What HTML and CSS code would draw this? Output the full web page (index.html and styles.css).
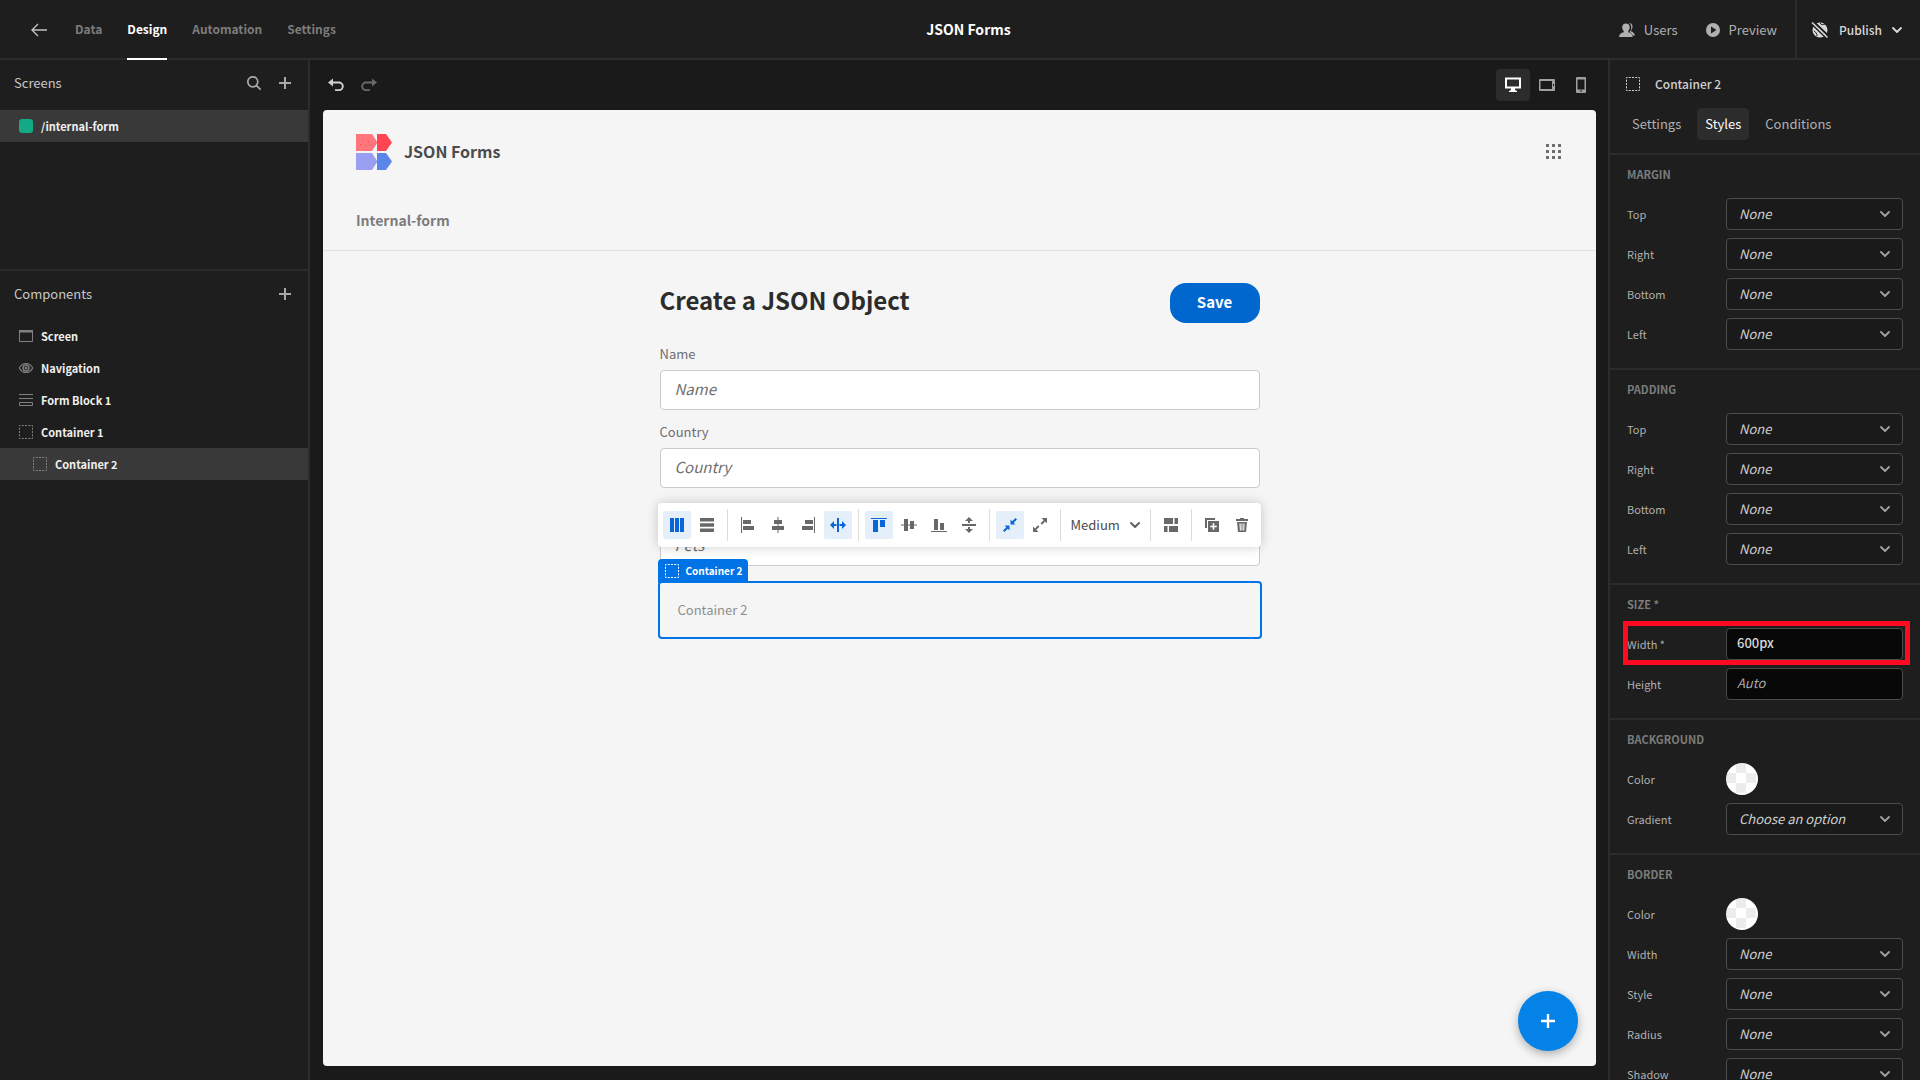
FILE: index.html
```html
<!DOCTYPE html>
<html lang="en">
<head>
<meta charset="utf-8">
<title>JSON Forms</title>
<link rel="stylesheet" href="styles.css">
</head>
<body>
<svg class="sprite" aria-hidden="true">
  <symbol id="chevron" viewBox="0 0 10 10"><path d="M1 3l4 4 4-4" fill="none" stroke="currentColor" stroke-width="1.800" stroke-linecap="round" stroke-linejoin="round"/></symbol>
  <symbol id="dashed" viewBox="0 0 14 14"><rect x=".5" y=".5" width="13" height="13" fill="none" stroke="currentColor" stroke-dasharray="2 1.25" stroke-dashoffset="1"/></symbol>
  <symbol id="plus" viewBox="0 0 12 12"><path d="M6 0v12M0 6h12" fill="none" stroke="currentColor" stroke-width="2"/></symbol>
  <symbol id="undo" viewBox="0 0 16 14"><path d="M4 4.500h7a3.800 3.800 0 0 1 0 7.600H7" fill="none" stroke="currentColor" stroke-width="1.900"/><path d="M0 4.500L5 .5v8z" fill="currentColor"/></symbol>
</svg>

<header class="topbar">
  <div class="topbar-left">
    <button class="icon-btn back" aria-label="Back"><svg width="16" height="14" viewBox="0 0 16 14"><path d="M7 1L1 7l6 6M1 7h15" fill="none" stroke="currentColor" stroke-width="1.4"/></svg></button>
    <nav class="tabs">
      <a href="#data">Data</a>
      <a href="#design" class="active">Design</a>
      <a href="#automation">Automation</a>
      <a href="#settings">Settings</a>
    </nav>
  </div>
  <h1 class="app-name">JSON Forms</h1>
  <div class="topbar-right">
    <button class="top-btn"><svg width="16" height="14" viewBox="0 0 16 14" fill="currentColor"><path d="M10 0c2.200 0 3.500 1.400 3.500 3.600 0 1.600-.7 3-1.600 3.900v.8c1.800.7 3.500 1.700 4.100 4.200h-2.200c-.5-1.700-1.700-2.800-3.300-3.600 1.500-1.500 2-3.600 1.700-5.500C11.900 1.800 11.100.7 10 0z"/><path d="M7 .5c2.300 0 3.700 1.400 3.700 3.700 0 1.500-.6 3-1.500 3.900v1.100c2.500.6 4.300 1.800 4.500 4.800H0c.3-3 2.200-4.200 4.700-4.800V8.100c-.9-.9-1.500-2.400-1.500-3.900C3.200 1.900 4.700.5 7 .5z"/></svg>Users</button>
    <button class="top-btn"><svg width="14" height="14" viewBox="0 0 14 14"><path fill="currentColor" fill-rule="evenodd" d="M7 0a7 7 0 1 1 0 14A7 7 0 0 1 7 0zM5 3.500v7l5.500-3.500z"/></svg>Preview</button>
    <button class="top-btn publish"><svg width="18" height="16" viewBox="0 0 18 16"><circle cx="9" cy="8" r="7.500" fill="currentColor"/><path d="M4 3.500c3 0 4 2 2 4M9 1c1 2 3 2 5 1M3 9c2 1 3 3 3 5" fill="none" stroke="#1e1e1e"/><path d="M0 1l15.500 15M3 0l14.500 14" stroke="#1e1e1e" stroke-width="2"/><path d="M1 .5l15.500 15" stroke="currentColor" stroke-width="1.500"/></svg>Publish<svg width="10" height="10"><use href="#chevron"/></svg></button>
  </div>
</header>

<div class="workspace">
  <aside class="left-panel">
    <section class="screens">
      <header class="panel-head">
        <h2>Screens</h2>
        <button class="icon-btn" aria-label="Search"><svg width="14" height="14" viewBox="0 0 14 14"><path d="M10.500 5.500a5 5 0 1 1-10 0 5 5 0 0 1 10 0zM9 9l4.500 4.500" transform="translate(.3 .3)" fill="none" stroke="currentColor" stroke-width="1.700"/></svg></button>
        <button class="icon-btn" aria-label="Add screen"><svg width="12" height="12"><use href="#plus"/></svg></button>
      </header>
      <a href="#internal-form" class="tree-row selected"><span class="screen-dot"></span>/internal-form</a>
    </section>
    <section class="components">
      <header class="panel-head">
        <h2>Components</h2>
        <button class="icon-btn" aria-label="Add component"><svg width="12" height="12"><use href="#plus"/></svg></button>
      </header>
      <a href="#screen" class="tree-row"><svg width="14" height="14" viewBox="0 0 14 14"><path d="M.5 1.500h13v11H.5z" fill="none" stroke="currentColor"/><path d="M0 1h14v2.500H0z" fill="currentColor"/></svg>Screen</a>
      <a href="#navigation" class="tree-row"><svg width="14" height="14" viewBox="0 0 14 14"><path d="M.3 7C2 3.800 4.300 2.500 7 2.500S12 3.800 13.700 7C12 10.200 9.700 11.500 7 11.500S2 10.200.3 7z" fill="none" stroke="currentColor" stroke-width="1.200"/><circle cx="7" cy="7" r="3" fill="none" stroke="currentColor" stroke-width="1.400"/><circle cx="7" cy="7" r="1.500" fill="currentColor"/></svg>Navigation</a>
      <a href="#form-block" class="tree-row"><svg width="14" height="14" viewBox="0 0 14 14"><path d="M0 1.500h14M0 5.500h14M.5 9.500h13v3H.5z" fill="none" stroke="currentColor"/></svg>Form Block 1</a>
      <a href="#container-1" class="tree-row"><svg width="14" height="14"><use href="#dashed"/></svg>Container 1</a>
      <a href="#container-2" class="tree-row nested selected"><svg width="14" height="14"><use href="#dashed"/></svg>Container 2</a>
    </section>
  </aside>

  <main class="stage">
    <div class="stage-bar">
      <button class="icon-btn bright" aria-label="Undo"><svg width="16" height="14"><use href="#undo"/></svg></button>
      <button class="icon-btn redo" aria-label="Redo"><svg width="16" height="14"><use href="#undo"/></svg></button>
      <div class="devices">
        <button class="device active" aria-label="Desktop"><svg width="16" height="16" viewBox="0 0 16 16"><path d="M1 1.500h14v9H1z" fill="none" stroke="currentColor" stroke-width="2"/><path d="M6 11h4v2l2 1v1H4v-1l2-1z" fill="currentColor"/></svg></button>
        <button class="device" aria-label="Tablet"><svg width="16" height="14" viewBox="0 0 16 14"><path fill="currentColor" fill-rule="evenodd" d="M1 1h14a1 1 0 0 1 1 1v10a1 1 0 0 1-1 1H1a1 1 0 0 1-1-1V2a1 1 0 0 1 1-1zm.5 2v8h11.500V3zM14 6v2h1V6z"/></svg></button>
        <button class="device" aria-label="Mobile"><svg width="10" height="16" viewBox="0 0 10 16"><path fill="currentColor" fill-rule="evenodd" d="M1 0h8a1 1 0 0 1 1 1v14a1 1 0 0 1-1 1H1a1 1 0 0 1-1-1V1a1 1 0 0 1 1-1zm.5 2.500v10h7v-10zM4 13.500v1h2v-1z"/></svg></button>
      </div>
    </div>

    <div class="canvas">
      <header class="app-head">
        <div class="app-brand">
          <svg width="36" height="36" viewBox="0 0 36 36"><path d="M0 0h16l5.500 8.500L16 17H0z" fill="#ff767c"/><path d="M21 0h9l6 8.500-6 8.500h-9z" fill="#ff4552"/><path d="M0 19h16l5.500 8.500L16 36H0z" fill="#9b9ff4"/><path d="M21 19h9l6 8.500-6 8.500h-9z" fill="#5986e8"/><path d="M4 10h1v1H4zM6 6h1v1H6zM9 11h1v1H9zM12 7h1v1h-1zM15 11h1v1h-1z" fill="#ff4552"/></svg>
          <span>JSON Forms</span>
          <button class="icon-btn apps" aria-label="Apps"><svg width="15" height="15" viewBox="0 0 15 15"><path d="M0 0h3v3H0zM6 0h3v3H6zM12 0h3v3h-3zM0 6h3v3H0zM6 6h3v3H6zM12 6h3v3h-3zM0 12h3v3H0zM6 12h3v3H6zM12 12h3v3h-3z" fill="currentColor"/></svg></button>
        </div>
        <a class="app-link" href="#internal-form">Internal-form</a>
      </header>

      <form class="form">
        <div class="form-head">
          <h2>Create a JSON Object</h2>
          <button type="button" class="save">Save</button>
        </div>
        <div class="field"><label for="name">Name</label><input id="name" placeholder="Name"></div>
        <div class="field"><label for="country">Country</label><input id="country" placeholder="Country"></div>
        <div class="field"><label for="pets">Pets</label><input id="pets" placeholder="Pets"></div>
        <div class="container-2">
          <span class="tag"><svg width="14" height="14"><use href="#dashed"/></svg>Container 2</span>
          <div class="toolbar">
            <button type="button" class="tool on" aria-label="Columns"><svg width="16" height="16" viewBox="0 0 16 16"><path d="M1 1h4v14H1zM6 1h4v14H6zM11 1h4v14h-4z"/></svg></button>
            <button type="button" class="tool" aria-label="Rows"><svg width="16" height="16" viewBox="0 0 16 16"><path d="M1 1h14v3.500H1zM1 6.200h14v3.500H1zM1 11.500h14V15H1z"/></svg></button>
            <i class="rule"></i>
            <button type="button" class="tool" aria-label="Align left"><svg width="16" height="16" viewBox="0 0 16 16"><path d="M1 0h1v16H1zM3 3h8v4H3zM3 9h11v4H3z"/></svg></button>
            <button type="button" class="tool" aria-label="Align centre"><svg width="16" height="16" viewBox="0 0 16 16"><path d="M7.500 0h1v16h-1zM4 3h8v4H4zM2 9h12v4H2z"/></svg></button>
            <button type="button" class="tool" aria-label="Align right"><svg width="16" height="16" viewBox="0 0 16 16"><path d="M14 0h1v16h-1zM5 3h8v4H5zM2 9h11v4H2z"/></svg></button>
            <button type="button" class="tool on" aria-label="Justify"><svg width="16" height="16" viewBox="0 0 16 16"><path d="M7 1h2v14H7zM0 8l4-4v3h2.500v2H4v3zM16 8l-4-4v3H9.500v2H12v3z"/></svg></button>
            <i class="rule"></i>
            <button type="button" class="tool on" aria-label="Align top"><svg width="16" height="16" viewBox="0 0 16 16"><path d="M0 1h16v1H0zM2 3h5v12H2zM9 3h5v7H9z"/></svg></button>
            <button type="button" class="tool" aria-label="Align middle"><svg width="16" height="16" viewBox="0 0 16 16"><path d="M0 7.500h16v1H0zM3 2h4v12H3zM9 4h4v8H9z"/></svg></button>
            <button type="button" class="tool" aria-label="Align bottom"><svg width="16" height="16" viewBox="0 0 16 16"><path d="M0 14h16v1H0zM3 2h4v11H3zM9 6h4v7H9z"/></svg></button>
            <button type="button" class="tool" aria-label="Stretch"><svg width="16" height="16" viewBox="0 0 16 16"><path d="M1 7h14v2H1zM8 0l4 4H9v2H7V4H4zM8 16l4-4H9v-2H7v2H4z"/></svg></button>
            <i class="rule"></i>
            <button type="button" class="tool on" aria-label="Shrink"><svg width="16" height="16" viewBox="0 0 16 16"><path d="M8.500 7.500V2.500l1.700 1.700L13.600 1 15 2.400l-3.300 3.400 1.700 1.700zM7.500 8.500v5l-1.700-1.700L2.400 15 1 13.600l3.300-3.400-1.700-1.700z"/></svg></button>
            <button type="button" class="tool" aria-label="Grow"><svg width="16" height="16" viewBox="0 0 16 16"><path d="M15 1v5.500l-1.900-1.900L10 7.700 8.600 6.300l3.100-3.100L9.500 1zM1 15V9.500l1.900 1.900L6 8.300l1.400 1.400-3.100 3.100L6.500 15z"/></svg></button>
            <i class="rule"></i>
            <div class="picker"><select aria-label="Gap"><option>Medium</option></select><svg width="10" height="10"><use href="#chevron"/></svg></div>
            <i class="rule"></i>
            <button type="button" class="tool" aria-label="Layout"><svg width="16" height="16" viewBox="0 0 16 16"><path d="M1 1h9v6H1zM11.500 1H15v6h-3.500zM1 9h3.500v6H1zM6 9h9v6H6z"/></svg></button>
            <i class="rule"></i>
            <button type="button" class="tool" aria-label="Duplicate"><svg width="16" height="16" viewBox="0 0 16 16"><path d="M1 1h10v2H3v8H1z"/><path fill-rule="evenodd" d="M4 4h11v11H4zm4.700 2.200v2.500H6.200v1.600h2.500v2.500h1.600v-2.500h2.500V8.700h-2.500V6.200z"/></svg></button>
            <button type="button" class="tool" aria-label="Delete"><svg width="16" height="16" viewBox="0 0 16 16"><path fill-rule="evenodd" d="M6 1h4v1h4v2H2V2h4zM3 5h10l-1 10H4zm2.400 1.500l.5 7h1l-.3-7zm2.100 0v7h1v-7zm2 0l-.3 7h1l.4-7z"/></svg></button>
          </div>
          <span class="empty">Container 2</span>
        </div>
      </form>
      <button class="fab" aria-label="Add"><svg width="14" height="14"><use href="#plus"/></svg></button>
    </div>
  </main>

  <aside class="right-panel">
    <header class="inspector-head">
      <div class="inspector-title"><svg width="14" height="14"><use href="#dashed"/></svg><h2>Container 2</h2></div>
      <div class="inspector-tabs">
        <button>Settings</button>
        <button class="active">Styles</button>
        <button>Conditions</button>
      </div>
    </header>
    <section class="group">
      <h3>MARGIN</h3>
      <div class="prop"><label for="mt">Top</label><div class="drop"><select id="mt"><option>None</option></select><svg width="10" height="10"><use href="#chevron"/></svg></div></div>
      <div class="prop"><label for="mr">Right</label><div class="drop"><select id="mr"><option>None</option></select><svg width="10" height="10"><use href="#chevron"/></svg></div></div>
      <div class="prop"><label for="mb">Bottom</label><div class="drop"><select id="mb"><option>None</option></select><svg width="10" height="10"><use href="#chevron"/></svg></div></div>
      <div class="prop"><label for="ml">Left</label><div class="drop"><select id="ml"><option>None</option></select><svg width="10" height="10"><use href="#chevron"/></svg></div></div>
    </section>
    <section class="group">
      <h3>PADDING</h3>
      <div class="prop"><label for="pt">Top</label><div class="drop"><select id="pt"><option>None</option></select><svg width="10" height="10"><use href="#chevron"/></svg></div></div>
      <div class="prop"><label for="pr">Right</label><div class="drop"><select id="pr"><option>None</option></select><svg width="10" height="10"><use href="#chevron"/></svg></div></div>
      <div class="prop"><label for="pb">Bottom</label><div class="drop"><select id="pb"><option>None</option></select><svg width="10" height="10"><use href="#chevron"/></svg></div></div>
      <div class="prop"><label for="pl">Left</label><div class="drop"><select id="pl"><option>None</option></select><svg width="10" height="10"><use href="#chevron"/></svg></div></div>
    </section>
    <section class="group">
      <h3>SIZE *</h3>
      <div class="prop highlight"><label for="w">Width *</label><input id="w" value="600px"></div>
      <div class="prop"><label for="h">Height</label><input id="h" placeholder="Auto"></div>
    </section>
    <section class="group">
      <h3>BACKGROUND</h3>
      <div class="prop"><label for="bgc">Color</label><button id="bgc" class="swatch" aria-label="Background color"></button></div>
      <div class="prop"><label for="bgg">Gradient</label><div class="drop"><select id="bgg"><option>Choose an option</option></select><svg width="10" height="10"><use href="#chevron"/></svg></div></div>
    </section>
    <section class="group">
      <h3>BORDER</h3>
      <div class="prop"><label for="bc">Color</label><button id="bc" class="swatch" aria-label="Border color"></button></div>
      <div class="prop"><label for="bw">Width</label><div class="drop"><select id="bw"><option>None</option></select><svg width="10" height="10"><use href="#chevron"/></svg></div></div>
      <div class="prop"><label for="bs">Style</label><div class="drop"><select id="bs"><option>None</option></select><svg width="10" height="10"><use href="#chevron"/></svg></div></div>
      <div class="prop"><label for="br">Radius</label><div class="drop"><select id="br"><option>None</option></select><svg width="10" height="10"><use href="#chevron"/></svg></div></div>
      <div class="prop"><label for="bsh">Shadow</label><div class="drop"><select id="bsh"><option>None</option></select><svg width="10" height="10"><use href="#chevron"/></svg></div></div>
    </section>
  </aside>
</div>
</body>
</html>
```

FILE: styles.css
```css
:root {
  --panel: #1e1e1e;
  --stage: #1a1a1a;
  --line: #2c2c2c;
  --row: #393939;
  --blue: #0073e6;
}

* { box-sizing: border-box; }

body {
  margin: 0;
  height: 100vh;
  display: flex;
  flex-direction: column;
  overflow: hidden;
  background: var(--stage);
  color: #c8c8c8;
  font: 13px/20px "Noto Sans CJK SC", "Noto Sans", sans-serif;
}

h1, h2, h3 { margin: 0; font-size: 13px; font-weight: 500; }
button, input, select { font: inherit; color: inherit; margin: 0; }
button { padding: 0; border: 0; background: none; }
a { color: inherit; text-decoration: none; }
svg { display: block; flex: none; }
select { appearance: none; border: 0; background: none; padding: 0; }
.sprite { position: absolute; width: 0; height: 0; }

.icon-btn { display: flex; align-items: center; justify-content: center; color: #a8a8a8; }
.bright { color: #d0d0d0; }
.redo { color: #6a6a6a; transform: scaleX(-1); }

/* Top bar */
.topbar {
  flex: none;
  height: 60px;
  display: grid;
  grid-template-columns: 1fr auto 1fr;
  padding-left: 17px;
  background: var(--panel);
  border-bottom: 2px solid var(--line);
}
.topbar-left { display: flex; align-items: center; padding-left: 14px; gap: 28px; }
.back { color: #c0c0c0; }
.tabs { display: flex; gap: 25px; height: 60px; font-size: 12px; font-weight: 700; color: #7c7c7c; }
.tabs a { line-height: 58px; border-bottom: 2px solid transparent; }
.tabs .active { color: #fff; border-color: #fff; }
.app-name { line-height: 58px; font-weight: 700; color: #fff; font-size: 14px; }
.topbar-right { display: flex; justify-content: flex-end; }
.top-btn { display: flex; align-items: center; gap: 9px; margin-right: 28px; color: #b0b0b0; }
.top-btn:nth-child(2) { margin-right: 18px; }
.top-btn.publish { margin-right: 0; padding: 0 18px 0 14px; gap: 10px; border-left: 2px solid var(--line); color: #d8d8d8; font-size: 12px; font-weight: 500; }

/* Layout */
.workspace {
  flex: 1;
  min-height: 0;
  display: grid;
  grid-template-columns: 310px 1fr 312px;
}

/* Left panel */
.left-panel { background: var(--panel); border-right: 2px solid var(--line); }
.screens { height: 211px; border-bottom: 2px solid var(--line); }
.panel-head { display: flex; align-items: center; height: 50px; padding: 0 17px 4px 14px; gap: 18px; }
.components .panel-head { height: 49px; }
.panel-head h2 { flex: 1; font-weight: 400; }
.tree-row {
  display: flex;
  align-items: center;
  gap: 8px;
  height: 32px;
  padding-left: 19px;
  font-size: 11px;
  font-weight: 700;
  color: #f0f0f0;
}
.tree-row svg { color: #808080; }
.nested { padding-left: 33px; }
.selected { background: var(--row); }
.screen-dot { width: 14px; height: 14px; border-radius: 3px; background: #12a985; }

/* Stage */
.stage { display: flex; flex-direction: column; padding: 0 12px 14px 13px; min-width: 0; }
.stage-bar { flex: none; display: flex; align-items: center; height: 50px; padding-left: 5px; gap: 17px; }
.devices { display: flex; margin: 0 -2px 0 auto; }
.device { width: 34px; height: 32px; display: flex; align-items: center; justify-content: center; border-radius: 4px; color: #a0a0a0; }
.device.active { background: #2c2c2c; color: #fff; }

.canvas { position: relative; flex: 1; min-height: 0; background: #f5f5f5; border-radius: 4px; color: #4b4b4b; }
.app-head { padding: 24px 35px 19px 33px; border-bottom: 1px solid #e1e1e1; }
.app-brand { display: flex; align-items: center; gap: 12px; font-size: 16px; font-weight: 700; }
.app-brand span { padding-bottom: 2px; }
.apps { margin-left: auto; padding-bottom: 2px; color: #6e6e6e; }
.app-link { display: inline-block; margin-top: 39px; line-height: 22px; font-size: 14px; font-weight: 700; color: #7c7c7c; }

.form { max-width: 600px; margin: 32px auto 0; }
.form-head { display: flex; justify-content: space-between; margin-bottom: 9px; }
.form-head h2 { font-size: 24px; line-height: 34px; font-weight: 700; color: #2c2c2c; }
.save { width: 90px; height: 40px; padding-bottom: 2px; border-radius: 16px; background: #0067cf; color: #fff; font-weight: 700; font-size: 15px; }
.field { display: grid; }
.field label { padding: 10px 0 4px; line-height: 24px; color: #6e6e6e; }
.field input {
  width: 100%;
  height: 40px;
  padding: 0 14px 3px;
  border: 1px solid #cacaca;
  border-radius: 4px;
  background: #fff;
  font-size: 15px;
}
.field input::placeholder { font-style: italic; color: #6e6e6e; }

.container-2 { position: relative; height: 54px; margin-top: 17px; padding-left: 18px; outline: 2px solid var(--blue); border-radius: 2px; }
.empty { line-height: 54px; color: #8e8e8e; }
.tag {
  position: absolute;
  left: -2px;
  bottom: 100%;
  display: flex;
  align-items: center;
  gap: 7px;
  height: 24px;
  padding: 0 6px 0 7px;
  border-radius: 4px 4px 0 0;
  background: var(--blue);
  color: #fff;
  font-size: 10px;
  font-weight: 700;
}
.toolbar {
  position: absolute;
  left: -2px;
  right: -1px;
  bottom: calc(100% + 36px);
  display: flex;
  align-items: center;
  gap: 2px;
  height: 44px;
  padding: 0 5px;
  border-radius: 4px;
  background: #fff;
  box-shadow: 0 0 12px rgba(0, 0, 0, .2);
}
.tool { width: 28px; height: 28px; display: flex; align-items: center; justify-content: center; border-radius: 2px; color: #686868; }
.tool svg { fill: currentColor; }
.tool.on { background: #e5effa; color: #0a66d8; }
.rule { width: 1px; height: 32px; margin: 0 4px; background: #dcdcdc; }
.picker { flex: 1; display: grid; align-items: center; }
.picker select { grid-area: 1 / 1; padding-left: 4px; color: #4b4b4b; }
.picker svg { grid-area: 1 / 1; justify-self: end; margin-right: 4px; pointer-events: none; color: #5c5c5c; }

.fab {
  position: absolute;
  right: 18px;
  bottom: 15px;
  width: 60px;
  height: 60px;
  display: flex;
  align-items: center;
  justify-content: center;
  border-radius: 50%;
  background: #0582e7;
  color: #fff;
  box-shadow: 0 3px 10px rgba(0, 0, 0, .3);
}

/* Inspector */
.right-panel { overflow: hidden; background: var(--panel); border-left: 2px solid var(--line); }
.inspector-head { padding: 14px 14px 13px; border-bottom: 2px solid var(--line); }
.inspector-title { display: flex; align-items: center; gap: 15px; height: 20px; padding-left: 2px; color: #d0d0d0; }
.inspector-title h2 { font-size: 12px; }
.inspector-tabs { display: flex; gap: 8px; margin-top: 14px; }
.inspector-tabs button { height: 32px; padding: 0 8px; border-radius: 4px; color: #b0b0b0; }
.inspector-tabs .active { background: #2c2c2c; color: #fff; }
.group { display: grid; gap: 8px; padding: 9px 17px 18px; border-bottom: 2px solid var(--line); }
.group h3 { line-height: 20px; margin-bottom: 6px; font-size: 11px; font-weight: 700; color: #7c7c7c; }
.prop { position: relative; display: grid; grid-template-columns: 99px 1fr; align-items: center; height: 32px; }
.prop label { font-size: 11px; color: #b0b0b0; }
.drop, .prop input { height: 32px; width: 100%; border: 1px solid #4b4b4b; border-radius: 4px; }
.drop { display: grid; align-items: center; background: #1a1a1a; }
.drop select { grid-area: 1 / 1; height: 30px; padding: 0 12px; font-style: italic; color: #d0d0d0; }
.drop svg { grid-area: 1 / 1; justify-self: end; margin-right: 12px; pointer-events: none; color: #a0a0a0; }
.prop input { padding: 0 10px 3px; background: #080808; color: #d8d8d8; font-weight: 500; }
.prop input::placeholder { font-style: italic; font-weight: 400; color: #a8a8a8; }
.swatch {
  width: 32px;
  height: 32px;
  border-radius: 50%;
  background: conic-gradient(#fff 25%, #ececec 0 50%, #fff 0 75%, #ececec 0) 0 10px / 20px 20px;
}
.highlight::after { content: ""; position: absolute; inset: -7px -7px -5px -4px; border: 5px solid #ff0a20; pointer-events: none; }
```
